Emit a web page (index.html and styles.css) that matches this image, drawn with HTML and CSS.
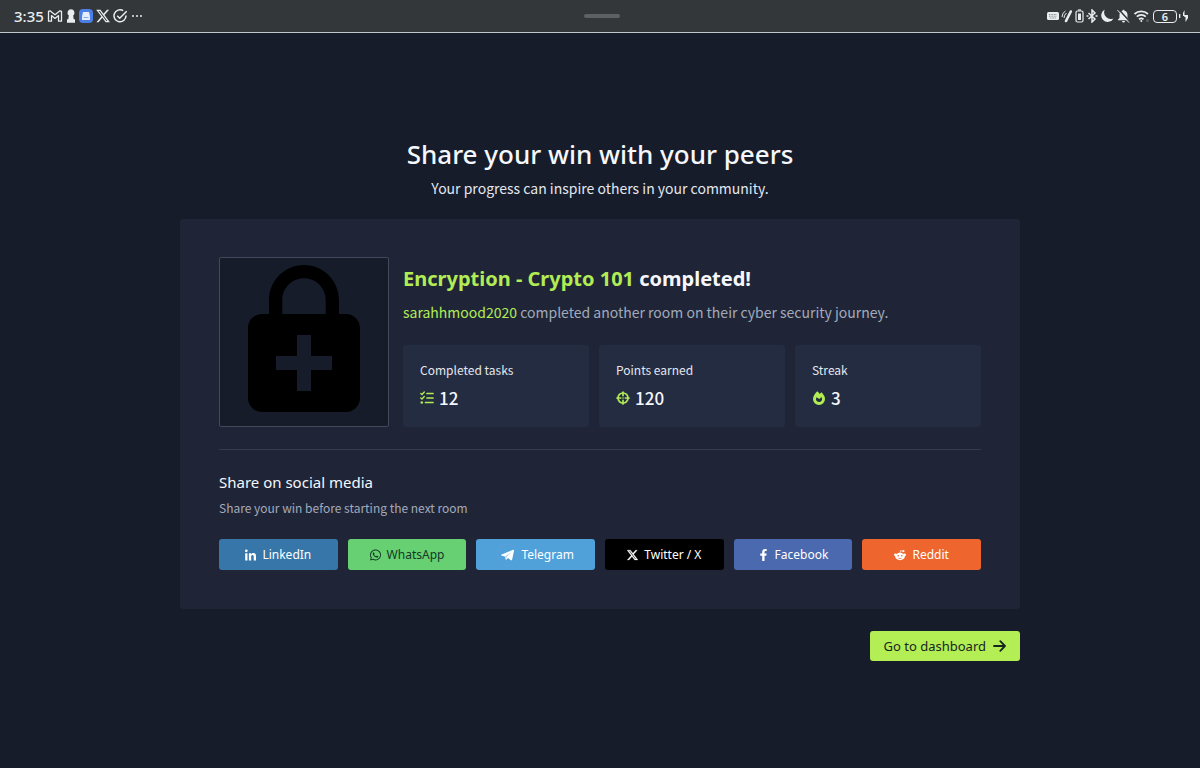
FILE: index.html
```html
<!DOCTYPE html>
<html lang="en">
<head>
<meta charset="utf-8">
<meta name="viewport" content="width=device-width, initial-scale=1">
<title>Share your win</title>
<link rel="stylesheet" href="styles.css">
</head>
<body>
<header class="status">
  <div class="status-side">
    <time class="clock">3:35</time>
    <svg width="16" height="14" viewBox="0 0 16 14" fill="none" stroke="currentColor" stroke-width="1.3" stroke-linejoin="round"><path d="M1.500 12.200V2.400L3 1.800l5 4 5-4 1.500.6v9.800h-3V6.600L8 9.400 4.500 6.600v5.600z"/></svg>
    <svg width="10" height="14" viewBox="0 0 10 14" fill="currentColor"><path d="M5 .2a3.500 3.500 0 0 1 2.200 6.200l.5 3.900h1.300v3.400H1v-3.400h1.300l.5-3.900A3.500 3.500 0 0 1 5 .2z"/></svg>
    <svg width="14" height="14" viewBox="0 0 14 14"><rect width="14" height="14" rx="4" fill="#4b7fe6"/><path d="M4 3h6l1 4.500V11H3V7.500z" fill="#e5eeff"/><path d="M4.500 8.500h5" stroke="#88a9ed"/></svg>
    <svg width="14" height="14" viewBox="1 1 22 22" fill="currentColor"><path d="M18.244 2.250h3.308l-7.227 8.260 8.502 11.240H16.170l-5.214-6.817L4.990 21.750H1.680l7.730-8.835L1.254 2.250H8.080l4.713 6.231zm-1.161 17.520h1.833L7.084 4.126H5.117z"/></svg>
    <svg width="15" height="14" viewBox="0 0 15 14" fill="none" stroke="currentColor" stroke-width="1.500"><path d="M10.200 1.700A6 6 0 1 0 13 6.500M4.200 6.800l2.500 2.500 7-7"/></svg>
    <svg width="12" height="14" viewBox="0 0 12 14" fill="currentColor"><circle cx="2" cy="7" r="1"/><circle cx="6" cy="7" r="1"/><circle cx="10" cy="7" r="1"/></svg>
  </div>
  <div class="handle"></div>
  <div class="status-side status-right">
    <svg width="13" height="14" viewBox="0 0 13 14"><rect x="1" y="3" width="12" height="8" rx="1.500" fill="currentColor"/><path d="M3 5.500h8M3 7.200h8M4 9h6" stroke="#73777a" stroke-width=".8" stroke-dasharray="1 .6"/></svg>
    <svg width="12" height="14" viewBox="0 0 12 14" fill="none" stroke="currentColor"><path d="M9.800 2.500L5 12" stroke-width="2.600" stroke-linecap="round"/><path d="M1 8q0-4 3.500-6M3 9q0-3 2.500-5"/></svg>
    <svg width="9" height="14" viewBox="0 0 9 14" fill="none" stroke="currentColor" stroke-width="1.200"><rect x="1" y="2" width="7" height="11" rx="1.500"/><path d="M3 1h3"/><rect x="3" y="4.500" width="3" height="6.500" fill="currentColor" stroke="none"/></svg>
    <svg width="12" height="14" viewBox="0 0 12 14" fill="none" stroke="currentColor" stroke-width="1.500"><path d="M2.500 4l6.500 6-3 3V1l3 3-6.500 6"/><path d="M.5 7h2M9.500 7h2"/></svg>
    <svg width="14" height="14" viewBox="0 0 14 14" fill="currentColor"><path d="M4.800.6a6.500 6.500 0 1 0 8.700 8.800A6.600 6.600 0 0 1 4.800.6z"/></svg>
    <svg width="15" height="14" viewBox="0 0 15 14"><path d="M7.500.8c.7 0 1 .5 1 1 2 .6 3 2 3 4.200v3l1.500 1.500v.7H2v-.7L3.500 9V6c0-2.200 1-3.600 3-4.200 0-.5.300-1 1-1zM6 12h3a1.500 1.500 0 0 1-3 0z" fill="currentColor"/><path d="M2.800.4l11 12" stroke="#33373a" stroke-width="1.500"/><path d="M1.500 1.100l11.500 12.500" stroke="currentColor"/></svg>
    <svg width="18" height="14" viewBox="0 0 18 14" fill="none" stroke="currentColor" stroke-width="1.700"><path d="M1.500 5a10 10 0 0 1 13.500 0M3.800 7.700a6.500 6.500 0 0 1 9 0M6 10.300a3.400 3.400 0 0 1 4.500 0"/><circle cx="8.300" cy="12" r="1" fill="currentColor" stroke="none"/><circle cx="14.500" cy="11.500" r="1.500" fill="#5b5f62" stroke="none"/></svg>
    <span class="battery">6</span>
    <svg width="10" height="14" viewBox="0 0 10 14" fill="currentColor"><path d="M0 5h1.300v4H0zM5.500 1v5H8l-.5 1H4V4zM6.500 13V8H5l1-2h3v3z"/></svg>
  </div>
</header>

<main class="page">
  <h1 class="title">Share your win with your peers</h1>
  <p class="lead">Your progress can inspire others in your community.</p>

  <section class="card">
    <div class="summary">
      <div class="badge">
        <svg viewBox="0 0 24 24" role="img" aria-label="Padlock"><path d="M18 8h-1V6c0-2.760-2.240-5-5-5S7 3.240 7 6v2H6c-1.100 0-2 .9-2 2v10c0 1.100.9 2 2 2h12c1.100 0 2-.9 2-2V10c0-1.100-.9-2-2-2zM8.900 6c0-1.710 1.390-3.100 3.100-3.100s3.100 1.390 3.100 3.100v2H8.900V6zM16 16h-3v3h-2v-3H8v-2h3v-3h2v3h3v2z"/></svg>
      </div>
      <div class="details">
        <h2 class="room"><span class="accent">Encryption - Crypto 101</span> completed!</h2>
        <p class="note"><span class="accent">sarahhmood2020</span> completed another room on their cyber security journey.</p>
        <div class="stats">
          <div class="stat">
            <span class="stat-label">Completed tasks</span>
            <span class="stat-value"><svg width="14" height="14" viewBox="0 0 14 14" fill="none" stroke="currentColor" stroke-width="1.700" stroke-linecap="round"><path d="M7 2.500h6M7 7h6M5.500 11.500H13"/><path d="M.8 2.500l1.200 1L4.300 1M.8 7L2 8l2.300-2.500" stroke-width="1.400"/><circle cx="1.800" cy="11.500" r="1.300" fill="currentColor" stroke="none"/></svg>12</span>
          </div>
          <div class="stat">
            <span class="stat-label">Points earned</span>
            <span class="stat-value"><svg width="14" height="14" viewBox="0 0 14 14" fill="none" stroke="currentColor" stroke-width="1.700" stroke-linecap="round"><circle cx="7" cy="7" r="5"/><path d="M7 1v3.600M7 9.400V13M1 7h3.600M9.400 7H13"/><circle cx="7" cy="7" r=".8" fill="currentColor" stroke="none"/></svg>120</span>
          </div>
          <div class="stat">
            <span class="stat-label">Streak</span>
            <span class="stat-value"><svg width="14" height="14" viewBox="0 0 14 14"><path d="M5.200.3c1 .7 1.900 1.600 2.700 2.700.5-.7.9-1.200 1.500-1.700 2 1.900 3.600 4.300 3.600 6.600a6 6 0 0 1-12 0C1 5.500 3 2.500 5.200.3z" fill="currentColor"/><path d="M4.500 6.300l2.800 1.800L9.500 6c1.200 2.600.3 5-2.400 5S3.300 8.700 4.500 6.300z" fill="#242c41"/></svg>3</span>
          </div>
        </div>
      </div>
    </div>

    <div class="share">
      <h3 class="share-title">Share on social media</h3>
      <p class="share-note">Share your win before starting the next room</p>
      <div class="networks">
        <button class="net linkedin" type="button"><svg width="11" height="12" viewBox="0 0 448 448" fill="currentColor"><path d="M100.280 448H7.400V148.900h92.880zM53.790 108.100C24.090 108.100 0 83.500 0 53.800a53.790 53.790 0 0 1 107.580 0c0 29.700-24.100 54.300-53.790 54.300zM447.900 448h-92.680V302.400c0-34.700-.7-79.200-48.290-79.200-48.290 0-55.690 37.700-55.690 76.700V448h-92.780V148.900h89.080v40.800h1.300c12.400-23.500 42.690-48.300 87.880-48.300 94 0 111.280 61.900 111.280 142.300V448z"/></svg>LinkedIn</button>
        <button class="net whatsapp" type="button"><svg width="11" height="12" viewBox="0 32 448 448" fill="currentColor"><path d="M380.900 97.100C339 55.100 283.200 32 223.900 32c-122.400 0-222 99.600-222 222 0 39.100 10.200 77.300 29.600 111L0 480l117.700-30.900c32.400 17.700 68.900 27 106.100 27h.1c122.300 0 224.100-99.600 224.100-222 0-59.300-25.200-115-67.100-157zm-157 341.600c-33.200 0-65.700-8.900-94-25.700l-6.700-4-69.800 18.300L72 359.200l-4.400-7c-18.500-29.400-28.200-63.300-28.200-98.200 0-101.700 82.800-184.500 184.600-184.500 49.300 0 95.600 19.200 130.400 54.100 34.800 34.900 56.200 81.200 56.100 130.500 0 101.800-84.900 184.600-186.600 184.600zm101.200-138.200c-5.500-2.800-32.800-16.200-37.900-18-5.100-1.900-8.800-2.800-12.500 2.800-3.700 5.600-14.300 18-17.600 21.800-3.200 3.700-6.500 4.200-12 1.400-32.600-16.300-54-29.100-75.500-66-5.700-9.800 5.700-9.100 16.300-30.300 1.800-3.700.9-6.900-.5-9.700-1.400-2.800-12.500-30.100-17.100-41.200-4.500-10.800-9.100-9.300-12.500-9.500-3.200-.2-6.900-.2-10.600-.2-3.700 0-9.700 1.400-14.800 6.900-5.100 5.600-19.400 19-19.400 46.300 0 27.300 19.900 53.700 22.600 57.400 2.800 3.700 39.100 59.700 94.800 83.800 35.200 15.200 49 16.500 66.600 13.900 10.700-1.600 32.800-13.400 37.400-26.400 4.600-13 4.600-24.100 3.200-26.400-1.300-2.500-5-3.900-10.500-6.600z"/></svg>WhatsApp</button>
        <button class="net telegram" type="button"><svg width="22" height="22" viewBox="0 0 22 22"><circle cx="11" cy="11" r="10.500" fill="none" stroke="#62a4d6" stroke-width=".7"/><path d="M4.200 10.700L16 5.800c.7-.3 1.200.1 1 .9l-1.900 9c-.1.700-.6.800-1.200.5L11 14l-1.500 1.500c-.3.300-.8.200-.9-.2l-.7-2.700-3.700-1.100c-.5-.2-.5-.6 0-.8z" fill="currentColor"/><path d="M8 12.600l6.500-4.300-5 5-.3 2" fill="#aed3ee"/></svg>Telegram</button>
        <button class="net twitter" type="button"><svg width="11" height="12" viewBox="1 1 22 22" fill="currentColor" stroke="currentColor" stroke-width=".6"><path d="M18.244 2.250h3.308l-7.227 8.260 8.502 11.240H16.170l-5.214-6.817L4.990 21.750H1.680l7.730-8.835L1.254 2.250H8.080l4.713 6.231zm-1.161 17.520h1.833L7.084 4.126H5.117z"/></svg>Twitter / X</button>
        <button class="net facebook" type="button"><svg width="11" height="12" viewBox="0 0 320 512" fill="currentColor"><path d="M279.140 288l14.220-92.660h-88.910v-60.130c0-25.350 12.420-50.060 52.240-50.060h40.420V6.260S260.430 0 225.360 0c-73.220 0-121.080 44.380-121.080 124.720v70.620H22.890V288h81.390v224h100.170V288z"/></svg>Facebook</button>
        <button class="net reddit" type="button"><svg width="12" height="12" viewBox="0 0 12 12"><path d="M6 4.500L6.600 1.600l2.200.6" fill="none" stroke="currentColor" stroke-width=".7"/><circle cx="9.400" cy="2.100" r="1.100" fill="currentColor"/><circle cx="1.400" cy="5.800" r="1.400" fill="currentColor"/><circle cx="10.600" cy="5.800" r="1.400" fill="currentColor"/><ellipse cx="6" cy="7.500" rx="4.800" ry="3.700" fill="currentColor"/><circle cx="4.200" cy="6.800" r=".8" fill="#ee652d"/><circle cx="7.800" cy="6.800" r=".8" fill="#ee652d"/><path d="M4.200 9q1.800 1.300 3.600 0" fill="none" stroke="#ee652d" stroke-width=".7"/></svg>Reddit</button>
      </div>
    </div>
  </section>

  <div class="actions">
    <button class="go" type="button">Go to dashboard<svg width="13" height="12" viewBox="0 0 13 12" fill="none" stroke="currentColor" stroke-width="1.800" stroke-linecap="round" stroke-linejoin="round"><path d="M1 6h11M7.300 1.200L12 6l-4.700 4.800"/></svg></button>
  </div>
</main>
</body>
</html>
```
FILE: styles.css
```css
* { box-sizing: border-box; }

body {
  margin: 0;
  min-height: 100vh;
  display: flex;
  flex-direction: column;
  background: #161c2a;
  color: #f5f7fc;
  font-family: "Noto Sans CJK SC", "Noto Sans", sans-serif;
  font-size: 14px;
}

h1, h2, h3, p { margin: 0; }
svg { display: block; flex: none; }
button { border: 0; cursor: pointer; font-family: "Noto Sans", sans-serif; }

.status {
  display: grid;
  grid-template-columns: 1fr auto 1fr;
  align-items: center;
  height: 33px;
  padding: 0 11px 0 14px;
  background: #33373a;
  border-bottom: 1px solid #c3c6c9;
  color: #e9edf0;
}
.status-side { display: flex; align-items: center; gap: 3px; }
.status-right { justify-content: flex-end; gap: 2px; }
.clock { font: 500 15px/20px "Noto Sans", sans-serif; }
.handle { width: 36px; height: 4px; border-radius: 2px; background: #5d6164; }
.battery {
  width: 24px;
  height: 13px;
  border: 1px solid currentColor;
  border-radius: 4px;
  font: 600 11px/11px "Noto Sans", sans-serif;
  text-align: center;
}

.page {
  width: 100%;
  max-width: 840px;
  margin: 0 auto;
  padding: 101px 0 32px;
}
.title {
  font: 600 26px/40px "Noto Sans", sans-serif;
  font-weight: 500;
  text-align: center;
}
.lead {
  margin-top: 2px;
  color: #e3e7f0;
  font-size: 14px;
  line-height: 24px;
  text-align: center;
}

.card {
  margin-top: 19px;
  padding: 38px 39px 39px;
  border-radius: 3px;
  background: #1f2537;
}
.summary {
  display: flex;
  gap: 14px;
  padding-bottom: 22px;
  border-bottom: 1px solid #343c50;
}
.badge {
  flex: none;
  width: 170px;
  height: 170px;
  border: 1px solid #414a5c;
  border-radius: 2px;
  background: #161c2a;
}
.details { flex: 1; min-width: 0; display: flex; flex-direction: column; }
.room { margin-top: 6px; font: 700 20px/32px "Noto Sans", sans-serif; }
.note { margin-top: 5px; color: #a2aabb; font-size: 14px; line-height: 24px; }
.accent { color: #b2ec55; }

.stats {
  display: grid;
  grid-template-columns: repeat(3, 1fr);
  gap: 10px;
  margin-top: auto;
}
.stat {
  display: flex;
  flex-direction: column;
  gap: 4px;
  padding: 15px 17px;
  border-radius: 3px;
  background: #242c41;
}
.stat-label { font-size: 12px; line-height: 20px; color: #e3e7f0; }
.stat-value {
  display: flex;
  align-items: center;
  gap: 5px;
  font-size: 17px;
  line-height: 28px;
  font-weight: 500;
}
.stat-value svg { color: #b2ec55; }

.share { padding-top: 20px; }
.share-title { font: 400 15px/24px "Noto Sans", sans-serif; }
.share-note { margin-top: 4px; color: #a2aabb; font-size: 12px; line-height: 20px; }
.networks {
  display: grid;
  grid-template-columns: repeat(6, 1fr);
  gap: 10px;
  margin-top: 21px;
}
.net {
  display: flex;
  align-items: center;
  justify-content: center;
  gap: 6px;
  height: 31px;
  padding: 0;
  border-radius: 3px;
  color: #fff;
  font-size: 12px;
}
.linkedin { background: #3776a9; }
.whatsapp { background: #66d072; color: #123a25; }
.telegram { background: #50a0da; gap: 2px; }
.twitter { background: #000; }
.facebook { background: #4b69ae; }
.reddit { background: #ee652d; }

.actions { display: flex; justify-content: flex-end; margin-top: 22px; }
.go {
  display: flex;
  align-items: center;
  gap: 7px;
  height: 30px;
  padding: 0 14px;
  border-radius: 3px;
  background: #b3ee55;
  color: #17251f;
  font-size: 13px;
}
```
